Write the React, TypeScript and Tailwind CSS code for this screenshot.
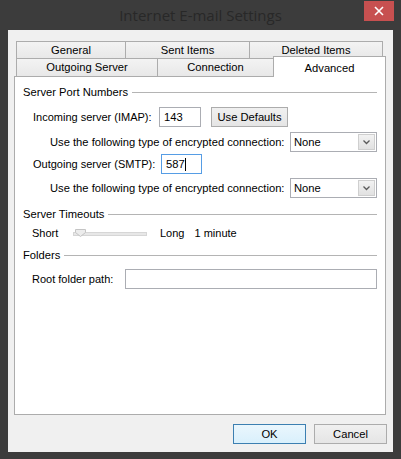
import React from "react";

function Btn({ w, label, focused }: { w: string; label: string; focused?: boolean }) {
  return (
    <div
      className={`${w} h-[20px] shrink-0 flex items-center justify-center border ${
        focused
          ? "border-[#3c7fb1] bg-gradient-to-b from-[#eaf6fd] to-[#d9f0fc]"
          : "border-[#acacac] bg-gradient-to-b from-[#f0f0f0] to-[#e5e5e5]"
      } text-[11.2px] text-black whitespace-nowrap`}
    >
      {label}
    </div>
  );
}

function Select() {
  return (
    <div className="ml-auto shrink-0 w-[87px] h-[20px] border border-[#abadb3] bg-white flex items-center">
      <span className="pl-[3px] text-[11.2px] text-black">None</span>
      <div className="ml-auto mr-[1px] w-[17px] h-[16px] border border-[#cfcfcf] bg-gradient-to-b from-[#f2f2f2] to-[#e1e1e1] flex items-center justify-center">
        <svg width="7" height="5" viewBox="0 0 7 5">
          <path d="M0.5 0.5 L3.5 3.5 L6.5 0.5" fill="none" stroke="#5a5a5a" strokeWidth="1.3" />
        </svg>
      </div>
    </div>
  );
}

function GroupHeader({ label, mt }: { label: string; mt: string }) {
  return (
    <div className={`${mt} h-[14px] flex items-center`}>
      <span className="text-[11.2px] text-black whitespace-nowrap">{label}</span>
      <div className="ml-[4px] flex-1 h-px bg-[#b4b4b4]" />
    </div>
  );
}

const T = "text-[11px] text-black whitespace-nowrap shrink-0";
const TE = "text-[11.2px] text-black whitespace-nowrap shrink-0";

export default function App() {
  return (
    <div className="w-[401px] h-[459px] bg-[#3c3c3c] flex flex-col font-['Liberation_Sans',Arial,sans-serif] overflow-hidden">
      {/* title bar */}
      <div className="relative h-[30px] flex items-center justify-center">
        <span className="text-[15px] text-[#282828] font-['Open_Sans',sans-serif] leading-none">
          Internet E-mail Settings
        </span>
        <div className="absolute right-[7px] top-[1px] w-[30px] h-[20px] bg-[#c75050] flex items-center justify-center">
          <svg width="10" height="10" viewBox="0 0 10 10">
            <path d="M1 1 L9 9 M9 1 L1 9" stroke="#ffffff" strokeWidth="1.6" />
          </svg>
        </div>
      </div>

      {/* client */}
      <div className="ml-[8px] w-[385px] h-[422px] bg-[#f0f0f0] flex flex-col">
        <div className="ml-[6px] mt-[11px] w-[372px] flex flex-col">
          {/* tab row 1 */}
          <div className="ml-[2px] h-[17px] flex">
            <div className="w-[109px] border-l border-t border-[#acacac] bg-gradient-to-b from-[#f3f3f3] to-[#e8e8e8] flex items-center justify-center text-[11.2px] text-black">
              General
            </div>
            <div className="w-[124px] border-l border-t border-[#acacac] bg-gradient-to-b from-[#f3f3f3] to-[#e8e8e8] flex items-center justify-center text-[11.2px] text-black">
              Sent Items
            </div>
            <div className="w-[134px] border-l border-t border-r border-[#acacac] bg-gradient-to-b from-[#f3f3f3] to-[#e8e8e8] flex items-center justify-center text-[11.2px] text-black">
              Deleted Items
            </div>
          </div>
          {/* tab row 2 */}
          <div className="h-[18px] flex items-end">
            <div className="ml-[2px] w-[141px] h-[18px] border-l border-t border-[#acacac] bg-gradient-to-b from-[#f3f3f3] to-[#e8e8e8] flex items-center justify-center text-[11.2px] text-black">
              Outgoing Server
            </div>
            <div className="w-[116px] h-[18px] border-l border-t border-[#acacac] bg-gradient-to-b from-[#f3f3f3] to-[#e8e8e8] flex items-center justify-center text-[11.2px] text-black">
              Connection
            </div>
            <div className="relative z-10 mb-[-1px] w-[113px] h-[21px] border-l border-t border-r border-[#acacac] bg-white flex items-start justify-center pt-[3px] text-[11.2px] text-black">
              Advanced
            </div>
          </div>
          {/* panel */}
          <div className="w-[372px] h-[339px] bg-white border border-[#acacac] flex flex-col pl-[8px] pr-[8px]">
            <GroupHeader label="Server Port Numbers" mt="mt-[8px]" />

            <div className="mt-[8px] h-[20px] flex items-center pl-[10px]">
              <span className={`w-[126px] ${T}`}>Incoming server (IMAP):</span>
              <div className="w-[42px] shrink-0 h-[20px] border border-[#abadb3] bg-white flex items-center pl-[4px] text-[11.2px] text-black">
                143
              </div>
              <div className="ml-[10px]">
                <Btn w="w-[77px]" label="Use Defaults" />
              </div>
            </div>

            <div className="mt-[5px] h-[20px] flex items-center pl-[27px]">
              <span className={TE}>Use the following type of encrypted connection:</span>
              <Select />
            </div>

            <div className="mt-[2px] h-[20px] flex items-center pl-[10px]">
              <span className={`w-[128px] ${T}`}>Outgoing server (SMTP):</span>
              <div className="w-[41px] shrink-0 h-[20px] border border-[#569de5] bg-white flex items-center pl-[4px] text-[11.2px] text-black">
                587<span className="inline-block w-px h-[13px] bg-black" />
              </div>
            </div>

            <div className="mt-[4px] h-[20px] flex items-center pl-[27px]">
              <span className={TE}>Use the following type of encrypted connection:</span>
              <Select />
            </div>

            <GroupHeader label="Server Timeouts" mt="mt-[9px]" />

            <div className="mt-[5px] h-[15px] flex items-center pl-[9px]">
              <span className={`w-[41px] ${T}`}>Short</span>
              <div className="relative shrink-0 w-[74px] h-[15px] flex items-center">
                <div className="w-[74px] h-[4px] bg-[#e7e7e7] border border-[#d6d6d6]" />
                <svg className="absolute left-[2px] top-[3px]" width="11" height="8" viewBox="0 0 11 8">
                  <path d="M0.5 0.5 H10.5 V3.5 L5.5 7.5 L0.5 3.5 Z" fill="#ececec" stroke="#c4c4c4" />
                </svg>
              </div>
              <span className={`ml-[13px] ${T}`}>Long</span>
              <span className={`ml-[10px] ${T}`}>1 minute</span>
            </div>

            <GroupHeader label="Folders" mt="mt-[7px]" />

            <div className="mt-[7px] h-[20px] flex items-center pl-[9px]">
              <span className={`w-[93px] ${T}`}>Root folder path:</span>
              <div className="flex-1 h-[20px] border border-[#abadb3] bg-white" />
            </div>
          </div>
        </div>

        {/* bottom buttons */}
        <div className="mt-[9px] flex justify-end pr-[6px] gap-[8px]">
          <Btn w="w-[73px]" label="OK" focused />
          <Btn w="w-[73px]" label="Cancel" />
        </div>
      </div>
    </div>
  );
}
